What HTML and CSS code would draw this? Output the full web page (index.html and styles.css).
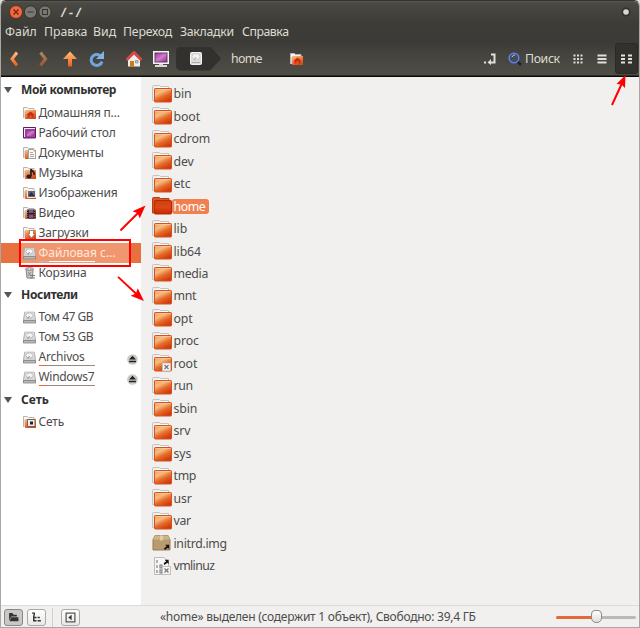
FILE: index.html
```html
<!DOCTYPE html>
<html lang="ru">
<head>
<meta charset="utf-8">
<title>/ - /</title>
<link rel="stylesheet" href="styles.css">
</head>
<body>
<svg class="defs" aria-hidden="true">
  <defs>
    <linearGradient id="orange" x1="0" y1="0" x2="0.5" y2="1"><stop offset="0" stop-color="#ffc184"/><stop offset=".5" stop-color="#ee8048"/><stop offset="1" stop-color="#d34c1c"/></linearGradient>
    <linearGradient id="folder" x1="0" y1="0" x2=".6" y2="1"><stop offset="0" stop-color="#ee9a5c"/><stop offset=".35" stop-color="#f5bd80"/><stop offset=".65" stop-color="#e56c2c"/><stop offset="1" stop-color="#d23c0c"/></linearGradient>
    <linearGradient id="deep" x1="0" y1="0" x2="0" y2="1"><stop offset="0" stop-color="#c9420f"/><stop offset=".5" stop-color="#dc4716"/><stop offset="1" stop-color="#c52805"/></linearGradient>
    <linearGradient id="arrow" x1="0" y1="0" x2="0" y2="1"><stop offset="0" stop-color="#ffc27c"/><stop offset="1" stop-color="#f05a1c"/></linearGradient>
    <linearGradient id="metal" x1="0" y1="0" x2="0" y2="1"><stop offset="0" stop-color="#f2f2f2"/><stop offset="1" stop-color="#c5c5c5"/></linearGradient>
    <linearGradient id="purple" x1="0" y1="0" x2="1" y2="1"><stop offset="0" stop-color="#8c3b91"/><stop offset=".5" stop-color="#d27cce"/><stop offset="1" stop-color="#8c2c8c"/></linearGradient>
    <symbol id="dir" viewBox="0 0 20 18"><path d="M.5 15.500V1.500Q.5.500 1.500.500H7.500L8.500 1.500H16.500V4H3V15.500Z" fill="#ededeb" stroke="#c4c4c2"/><path d="M3 2.700H16" stroke="#fff"/><rect x="2.500" y="3.500" width="17" height="13.500" rx=".8" fill="url(#folder)" stroke="#d6511f"/><path d="M3.500 4.500H18.500" stroke="#ffd0a5" opacity=".6"/></symbol>
    <symbol id="dir-red" viewBox="0 0 20 18"><path d="M.5 16V1.500Q.5.500 1.500.500H7.500L8.500 1.500H17V4H3V16Z" fill="#dc5a26" stroke="#b83e14"/><rect x="2.500" y="3.500" width="17" height="13.500" rx=".8" fill="url(#deep)" stroke="#b82808"/></symbol>
    <symbol id="place" viewBox="0 0 13 12"><path d="M.5 11V.500H4.500L5.500 1.500H11V4H2V11" fill="#f7f7f5" stroke="#b7b5b2"/><rect x="2" y="3" width="11" height="9" fill="url(#orange)"/></symbol>
    <symbol id="house-mark" viewBox="0 0 13 12"><use href="#place"/><path d="M3.500 7.800 7.500 4.500 11.500 7.800H10.500V10.500H8.500V8.500H6.500V10.500H4.500V7.800Z" fill="#c92d0b"/></symbol>
    <symbol id="drive" viewBox="0 0 14 13"><path d="M2 .500H12L13.500 9V12.500H.500V9Z" fill="url(#metal)" stroke="#aaa"/><path d="M.5 9.800H13.500V12.500H.500Z" fill="#bbbbb9" stroke="#858582"/><ellipse cx="7" cy="4.200" rx="4" ry="2.800" fill="#f4f4f4" stroke="#b4b4b4"/><path d="M7 5 5 8" stroke="#888" fill="none"/></symbol>
    <symbol id="drive-front" viewBox="0 0 12 13"><rect x=".5" y=".5" width="11" height="12" rx="1" fill="#dcdcda" stroke="#f2f2f0"/><ellipse cx="6" cy="4.500" rx="4" ry="3" fill="#f3f3f2" stroke="#ccc"/><path d="M6 5 4 8M2 10.500H10" stroke="#aaa"/></symbol>
    <symbol id="eject" viewBox="0 0 12 12"><circle cx="6" cy="6" r="5.800" fill="#c8c8c6"/><path d="M6 2 9.800 6H2.200ZM2.200 7.300H9.800V9H2.200Z" fill="#20201f"/></symbol>
    <symbol id="link" viewBox="0 0 7 7"><path d="M0 5 3 3 1.500 1H6V6L4.500 4.500 1 7Z" fill="#111"/></symbol>
    <symbol id="lock" viewBox="0 0 9 9"><rect x=".5" y=".5" width="8" height="8" fill="#f7f7f7" stroke="#c0c0be"/><path d="m2.500 2.500 4 4m0-4-4 4" stroke="#777" stroke-width="1.300"/></symbol>
    <symbol id="pointer" viewBox="0 0 28 28"><path d="M1.500 26.500 21 7" stroke="#f00" stroke-width="2"/><path d="M27.500.500 21.500 14 19.500 8.500 14 6.500Z" fill="#f00"/></symbol>
  </defs>
</svg>
<div class="window">
  <header class="chrome">
    <div class="titlebar">
      <svg class="controls" viewBox="0 0 44 14"><circle cx="7" cy="7" r="6.500" fill="#f2683e" stroke="#55301f"/><path d="m4.500 4.500 5 5m0-5-5 5" stroke="#6c2412" stroke-width="1.200"/><circle cx="21.500" cy="7" r="6.200" fill="#7a7870" stroke="#33312c"/><path d="M18.500 7H24.500" stroke="#35332e"/><circle cx="36" cy="7" r="6.200" fill="#7a7870" stroke="#33312c"/><rect x="33.500" y="4.500" width="5" height="5" fill="none" stroke="#35332e"/></svg>
      <h1 class="title">/ - /</h1>
      <svg class="knob" viewBox="0 0 10 10"><circle cx="5" cy="5" r="4.500" fill="#34322e"/><circle cx="5" cy="5" r="2.800" fill="#d9d7d0"/></svg>
    </div>
    <nav class="menubar">
      <span class="m1">Файл</span><span class="m2">Правка</span><span class="m3">Вид</span><span class="m4">Переход</span><span class="m5">Закладки</span><span class="m6">Справка</span>
    </nav>
    <div class="toolbar">
      <svg viewBox="0 0 16 16"><path d="M11 1.500 6 8 11 14.500" fill="none" stroke="url(#arrow)" stroke-width="3"/></svg>
      <svg class="dim" viewBox="0 0 16 16"><path d="M5.500 1.500 10.500 8 5.500 14.500" fill="none" stroke="url(#arrow)" stroke-width="3"/></svg>
      <svg viewBox="0 0 16 16"><path d="M8 .500 15 8H10V15.500H6V8H1Z" fill="url(#arrow)"/></svg>
      <svg viewBox="0 0 16 16"><path d="M11 4.500A5.500 5.500 0 1 0 13 10.500" fill="none" stroke="#6ea5df" stroke-width="3"/><path d="M15 0V8H7Z" fill="#82b4e8"/></svg>
      <svg viewBox="0 0 16 16"><path d="M2 8H14V15.500H2Z" fill="#eeeee9"/><path d="M3 8 8 3 13 8Z" fill="#eeeee9"/><path d="M.5 9 8 1.500 15.500 9" fill="none" stroke="#d84848" stroke-width="3"/><path d="M4 10H8V16H4Z" fill="#cc7a20"/><path d="M9.500 9.500H12V12H9.500Z" fill="#b8cbd6" stroke="#777" stroke-width=".6"/></svg>
      <svg viewBox="0 0 16 16"><rect x=".5" y=".5" width="15" height="12" fill="#ddd" stroke="#f4f4f4"/><rect x="2" y="2" width="12" height="9" fill="url(#purple)" stroke="#56205d" stroke-width=".7"/><path d="M6 13H10V14H14V16H2V14H6Z" fill="#d8d8d4"/></svg>
      <div class="crumb"><svg viewBox="0 0 12 13"><use href="#drive-front"/></svg></div>
      <span class="path">home</span>
      <svg class="small" viewBox="0 0 13 12"><use href="#house-mark"/></svg>
      <svg class="toggle" viewBox="0 0 12 12"><path d="M7 1.500H10.500V9.500H6" fill="none" stroke="#e2dfd5" stroke-width="2"/><path d="M7 6V12L3.500 9.500ZM0 8.500H2V10.500H0Z" fill="#e2dfd5"/></svg>
      <svg class="search" viewBox="0 0 14 14"><path d="m9 9 4 4" stroke="#20242c" stroke-width="2.500"/><circle cx="6" cy="6" r="4.800" fill="#454b5b" stroke="#5a81e5" stroke-width="1.600"/><path d="M4 5a3 3 0 0 1 3-2" fill="none" stroke="#b9c9e9"/></svg>
      <span class="search-text">Поиск</span>
      <svg class="view" viewBox="0 0 10 10"><path d="M.5 1.500H10M.5 5H10M.5 8.500H10" stroke="#e2dfd5" stroke-width="2" stroke-dasharray="2 1.500"/></svg>
      <svg class="view" viewBox="0 0 10 10"><path d="M.5 1.500H9.500M.5 5H9.500M.5 8.500H9.500" stroke="#e2dfd5" stroke-width="2"/></svg>
      <div class="active"><svg class="view" viewBox="0 0 11 10"><path d="M0 1.500H4M7 1.500H11M0 5H4M7 5H11M0 8.500H4M7 8.500H11" stroke="#e2dfd5" stroke-width="2"/></svg></div>
    </div>
  </header>
  <main class="content">
    <aside class="sidebar">
      <h2 class="h-computer">Мой компьютер</h2>
      <div class="item"><svg viewBox="0 0 13 12"><use href="#house-mark"/></svg><span class="s-home">Домашняя п…</span></div>
      <div class="item"><svg viewBox="0 0 13 12"><path d="M.5.500H12.500V11H.500Z" fill="#a23ca0" stroke="#59205d"/><path d="M1 1.500H12M1.500 2V10" stroke="#eee"/><path d="M4 4H11V9H4Z" fill="url(#purple)"/></svg><span class="s-desk">Рабочий стол</span></div>
      <div class="item"><svg viewBox="0 0 13 12"><use href="#place"/><path d="M5.500 2.500H10L12.500 5V11.500H5.500Z" fill="#fafaf7" stroke="#a0a09c"/><path d="M7 5.500H10M7 7.500H11M7 9.500H11" stroke="#aaa"/></svg><span class="s-docs">Документы</span></div>
      <div class="item"><svg viewBox="0 0 13 12"><use href="#place"/><path d="M8 9V2C8 4 12 4 11 8" fill="none" stroke="#222" stroke-width="1.700"/><ellipse cx="6" cy="9.500" rx="2.500" ry="2" fill="#222"/></svg><span>Музыка</span></div>
      <div class="item"><svg viewBox="0 0 13 12"><use href="#place"/><path d="M4.500 3.500H12.500V10.500H4.500Z" fill="#68657b" stroke="#eee"/><path d="M6 8 8 5 12 9H6Z" fill="#273248"/></svg><span class="s-pics">Изображения</span></div>
      <div class="item"><svg viewBox="0 0 13 12"><use href="#place"/><path d="M4 2.500H12.500V11.500H4Z" fill="#271b26"/><path d="M6 3H10.500V6H6ZM6 7.500H10.500V11H6Z" fill="#7d587e"/><path d="M4.800 3V12M11.700 3V12" stroke="#aaa" stroke-width=".7" stroke-dasharray="1 1"/></svg><span>Видео</span></div>
      <div class="item"><svg viewBox="0 0 13 12"><use href="#place"/><path d="M6.500 3.500H10.500V7H12L8.500 11 5 7H6.500Z" fill="#fff" stroke="#8d6552" stroke-width=".7"/></svg><span class="s-down">Загрузки</span></div>
      <div class="item selected"><b class="frame"></b><svg class="drive" viewBox="0 0 14 13"><use href="#drive"/></svg><span>Файловая с…</span><i class="usage"></i></div>
      <div class="item"><svg viewBox="0 0 13 12"><path d="M3 2H10L9.500 11H4Z" fill="#c9c9c7" stroke="#858583"/><ellipse cx="6.500" cy="2" rx="4" ry="1.200" fill="#eee" stroke="#777"/><path d="M5 5 8 9M8 5 5 9" stroke="#888"/><path d="M7 8.500H12M7 11H12" stroke="#777"/></svg><span class="s-trash">Корзина</span></div>
      <h2 class="h-media">Носители</h2>
      <div class="item"><svg class="drive" viewBox="0 0 14 13"><use href="#drive"/></svg><span class="s-tom">Том 47 GB</span></div>
      <div class="item"><svg class="drive" viewBox="0 0 14 13"><use href="#drive"/></svg><span class="s-tom">Том 53 GB</span></div>
      <div class="item"><svg class="drive" viewBox="0 0 14 13"><use href="#drive"/></svg><span class="s-arch">Archivos</span><i class="usage"></i><svg class="eject" viewBox="0 0 12 12"><use href="#eject"/></svg></div>
      <div class="item"><svg class="drive" viewBox="0 0 14 13"><use href="#drive"/></svg><span class="s-win">Windows7</span><i class="usage"></i><svg class="eject" viewBox="0 0 12 12"><use href="#eject"/></svg></div>
      <h2 class="h-net">Сеть</h2>
      <div class="item"><svg viewBox="0 0 13 12"><use href="#place"/><path d="M4.500 3.500H12V10.500H4.500Z" fill="#eee" stroke="#7d5c48"/><path d="M7 5.500H10V8.500H7Z" fill="#222"/></svg><span class="s-net">Сеть</span></div>
    </aside>
    <section class="files">
      <div class="file"><svg viewBox="0 0 20 18"><use href="#dir"/></svg><span>bin</span></div>
      <div class="file"><svg viewBox="0 0 20 18"><use href="#dir"/></svg><span>boot</span></div>
      <div class="file"><svg viewBox="0 0 20 18"><use href="#dir"/></svg><span>cdrom</span></div>
      <div class="file"><svg viewBox="0 0 20 18"><use href="#dir"/></svg><span>dev</span></div>
      <div class="file"><svg viewBox="0 0 20 18"><use href="#dir"/></svg><span>etc</span></div>
      <div class="file chosen"><svg viewBox="0 0 20 18"><use href="#dir-red"/></svg><span>home</span></div>
      <div class="file"><svg viewBox="0 0 20 18"><use href="#dir"/></svg><span>lib</span></div>
      <div class="file"><svg viewBox="0 0 20 18"><use href="#dir"/></svg><span>lib64</span></div>
      <div class="file"><svg viewBox="0 0 20 18"><use href="#dir"/></svg><span class="tight">media</span></div>
      <div class="file"><svg viewBox="0 0 20 18"><use href="#dir"/></svg><span class="tight">mnt</span></div>
      <div class="file"><svg viewBox="0 0 20 18"><use href="#dir"/></svg><span>opt</span></div>
      <div class="file"><svg viewBox="0 0 20 18"><use href="#dir"/></svg><span>proc</span></div>
      <div class="file"><svg viewBox="0 0 20 18"><use href="#dir"/><use href="#lock" x="10" y="8.500" width="9" height="9"/></svg><span>root</span></div>
      <div class="file"><svg viewBox="0 0 20 18"><use href="#dir"/></svg><span class="tight">run</span></div>
      <div class="file"><svg viewBox="0 0 20 18"><use href="#dir"/></svg><span>sbin</span></div>
      <div class="file"><svg viewBox="0 0 20 18"><use href="#dir"/></svg><span>srv</span></div>
      <div class="file"><svg viewBox="0 0 20 18"><use href="#dir"/></svg><span>sys</span></div>
      <div class="file"><svg viewBox="0 0 20 18"><use href="#dir"/></svg><span class="tight">tmp</span></div>
      <div class="file"><svg viewBox="0 0 20 18"><use href="#dir"/></svg><span>usr</span></div>
      <div class="file"><svg viewBox="0 0 20 18"><use href="#dir"/></svg><span class="tight">var</span></div>
      <div class="file"><svg viewBox="0 0 20 18"><path d="M3 1.500H16L18 5.500V16H1V5.500Z" fill="#b89b6e" stroke="#9b7c50"/><path d="M3 1.500H16L18 5.500H1Z" fill="#cdb48d"/><path d="M8 1.500H11V6.500H8Z" fill="#e0cda7"/><use href="#link" x="12" y="10" width="6" height="6"/></svg><span class="tight">initrd.img</span></div>
      <div class="file"><svg viewBox="0 0 20 18"><path d="M2.500.500H12L16.500 5V17.500H2.500Z" fill="#f7f7f7" stroke="#bbb"/><path d="M5 3V6M5 8V11M8 8h2v3H8ZM5 13v3M8 13h2v3H8Z" stroke="#777" fill="none" stroke-width="1.100"/><use href="#link" x="11.500" y="2" width="6" height="6"/><use href="#lock" x="10" y="9" width="9" height="9"/></svg><span class="tighter">vmlinuz</span></div>
    </section>
  </main>
  <footer class="statusbar">
    <span class="button pressed"><svg viewBox="0 0 10 10"><path d="M1 1H4L5 2.500H8V4H3L1 8ZM3 4.800H9.500V8.500H1.500Z" fill="#333"/></svg></span>
    <span class="button"><svg viewBox="0 0 10 10"><path d="M1 1H3V3M2.500 3V8H5M2.500 5H5M6 5H8M6 8H9" fill="none" stroke="#333" stroke-width="1.300"/></svg></span>
    <span class="divider"></span>
    <span class="button"><svg viewBox="0 0 10 10"><rect x="1" y="1" width="8" height="8" fill="none" stroke="#444"/><path d="M6 2.500V7.500L3 5Z" fill="#333"/></svg></span>
    <span class="status">«home» выделен (содержит 1 объект), Свободно: 39,4 ГБ</span>
    <span class="slider"><i></i></span>
  </footer>
  <svg class="pointer p1" viewBox="0 0 28 28"><use href="#pointer"/></svg>
  <svg class="pointer p2" viewBox="0 0 28 28"><use href="#pointer"/></svg>
  <svg class="pointer p3" viewBox="0 0 16 31"><path d="M1 30 11.500 7" stroke="#f00" stroke-width="2"/><path d="M14.500 0 14 13 10.500 9.500 5.500 9Z" fill="#f00"/></svg>
</div>
</body>
</html>
```
FILE: styles.css
```css
* { box-sizing: border-box; }
body { margin: 0; background: #ddd; font: 12.3px/20px "Noto Sans", sans-serif; color: #4c4c4c; }
svg { display: block; flex: none; }
.defs { position: absolute; width: 0; height: 0; }
.window { position: relative; width: 640px; height: 628px; border: 1px solid #aaa6a2; border-top-color: #34332f; border-radius: 6px 6px 0 0; overflow: hidden; display: flex; flex-direction: column; background: #f1f0ee; }

.chrome { height: 76px; flex: none; color: #dfdbd2; background: linear-gradient(#595750 0, #4a4943 2px, #3d3c37 22px, #3c3b37 42px, #45443f 54px, #4f4d46 74px, #0b0a05 75px); }
.titlebar { height: 21px; display: flex; align-items: center; padding: 0 8px; }
.controls { width: 44px; height: 14px; }
.title { margin: 0 auto 0 8px; font-size: 13px; font-weight: 600; line-height: 20px; word-spacing: -1.5px; letter-spacing: .5px; transform: skewX(-6deg); }
.knob { width: 10px; height: 10px; }
.menubar { height: 20px; display: flex; padding-left: 4px; line-height: 20px; white-space: nowrap; }
.m1 { width: 39px; }
.m2 { width: 49px; }
.m3 { width: 30px; }
.m4 { width: 57px; letter-spacing: -.2px; }
.m5 { width: 62px; letter-spacing: -.3px; }
.m6 { letter-spacing: -.45px; }

.toolbar { height: 33px; display: flex; align-items: center; }
.toolbar > svg { width: 16px; height: 16px; margin-left: 11px; }
.toolbar > svg:first-child { margin-left: 5px; }
.toolbar > svg:nth-child(2) { margin-left: 13px; }
.toolbar > svg:nth-child(5) { margin-left: 21px; }
.toolbar .dim { opacity: .55; }
.crumb { width: 45px; height: 24px; margin-left: 7px; padding-left: 14px; display: flex; align-items: center; background: #32312d; clip-path: polygon(3px 0, 76% 0, 100% 50%, 76% 100%, 3px 100%, 0 88%, 0 12%); }
.crumb svg { width: 12px; height: 13px; }
.path { width: 31px; margin-left: 10px; letter-spacing: -.7px; }
.path, .search-text { padding-top: 1px; }
.toolbar > .small { width: 13px; height: 12px; margin-left: 28px; }
.toolbar > .toggle { width: 12px; height: 12px; margin-left: auto; }
.toolbar > .search { width: 14px; height: 14px; margin-left: 12px; }
.search-text { width: 35px; margin-left: 3px; letter-spacing: -.35px; }
.toolbar > .view { width: 10px; height: 10px; margin-left: 13px; }
.toolbar > .view + .view { margin-left: 14px; }
.active { width: 23px; height: 31px; margin: 0 1px 0 8px; border: 1px solid #2a2925; border-radius: 3px; background: #32312d; display: flex; align-items: center; justify-content: center; }
.active .view { width: 11px; height: 10px; }

.content { height: 528px; flex: none; display: flex; }
.sidebar { width: 140px; background: #fff; padding-top: 2px; white-space: nowrap; }
.sidebar h2 { height: 22px; margin: 0; padding-left: 3px; display: flex; align-items: center; gap: 9px; font-size: 12px; letter-spacing: -.4px; color: #303030; }
.sidebar h2::before { content: ""; border: 4px solid transparent; border-top: 6px solid #555; border-bottom: 0; }
.sidebar .h-media { margin-top: 1px; letter-spacing: -.35px; }
.sidebar .h-net { margin-top: 2px; letter-spacing: 0; }
.h-computer + .item { margin-top: 2px; }
.h-media + .item, .h-net + .item { margin-top: 1px; }
.item { position: relative; height: 20px; display: flex; align-items: center; padding-left: 22px; gap: 2.500px; font-size: 12px; }
.item svg { position: relative; width: 13px; height: 12px; }
.item span { position: relative; }
.item .drive { width: 13px; height: 13px; }
.s-home { letter-spacing: -.2px; }
.s-desk, .s-docs { letter-spacing: -.1px; }
.s-pics { letter-spacing: -.1px; }
.s-tom { letter-spacing: -.5px; }
.s-arch { letter-spacing: -.2px; }
.s-win { letter-spacing: -.3px; }
.s-down, .s-trash { letter-spacing: -.15px; }
.s-net { letter-spacing: -.2px; }
.selected { color: #ffe9df; background: #e9703f; }
.usage { position: absolute; left: 38px; top: 18px; width: 56px; height: 1px; background: linear-gradient(90deg, #ee672e 7px, #998880 7px); }
.selected .usage { background: linear-gradient(90deg, #bbb 10px, #fff 10px); }
.frame { position: absolute; left: 18px; top: -4px; width: 112px; height: 28px; border: 2px solid #f00; background: linear-gradient(#fff 2px, #f0976f 2px 22px, #fff 22px); }
.item .eject { position: absolute; left: 126px; top: 7px; width: 11px; height: 11px; }

.files { flex: 1; padding: 5.500px 0 0 11px; }
.file { height: 22.48px; display: flex; align-items: center; }
.file svg { width: 20px; height: 18px; }
.file span { line-height: 15px; padding: 0 5px 0 1.500px; letter-spacing: -.1px; }
.file .tight { letter-spacing: -.3px; }
.file .tighter { letter-spacing: -.6px; }
.file.chosen span { padding-right: 4px; letter-spacing: -.45px; color: #fff; background: #f0804f; border-radius: 3px; }

.statusbar { height: 22px; flex: none; border-top: 1px solid #dddbd8; display: flex; align-items: center; padding: 1px 3px 0; }
.button { width: 19px; height: 17px; margin-right: 4px; border: 1px solid #aaa9a6; border-radius: 3px; background: linear-gradient(#fff, #e9e8e6); display: flex; align-items: center; justify-content: center; }
.button svg { width: 11px; height: 11px; }
.pressed { background: #c9c8c6; border-color: #888; }
.divider { height: 19px; width: 1px; margin: 0 8px 0 2px; background: #d2d0cd; }
.status { width: 317px; margin-left: 76px; font-size: 12px; letter-spacing: -.25px; white-space: nowrap; }
.slider { position: relative; width: 80px; height: 3px; margin-left: auto; border-radius: 2px; background: linear-gradient(90deg, #e06a38 40px, #bbb9b5 40px); }
.slider i { position: absolute; left: 35px; top: -6px; width: 11px; height: 13px; border: 1px solid #8c8b88; border-radius: 4px 4px 5px 5px; background: linear-gradient(#fff, #ddd); }

.pointer { position: absolute; width: 27px; height: 27px; z-index: 2; }
.p1 { left: 118px; top: 204px; }
.p2 { left: 116px; top: 274px; transform: rotate(88deg); }
.p3 { left: 610px; top: 74px; width: 16px; height: 31px; }
```
